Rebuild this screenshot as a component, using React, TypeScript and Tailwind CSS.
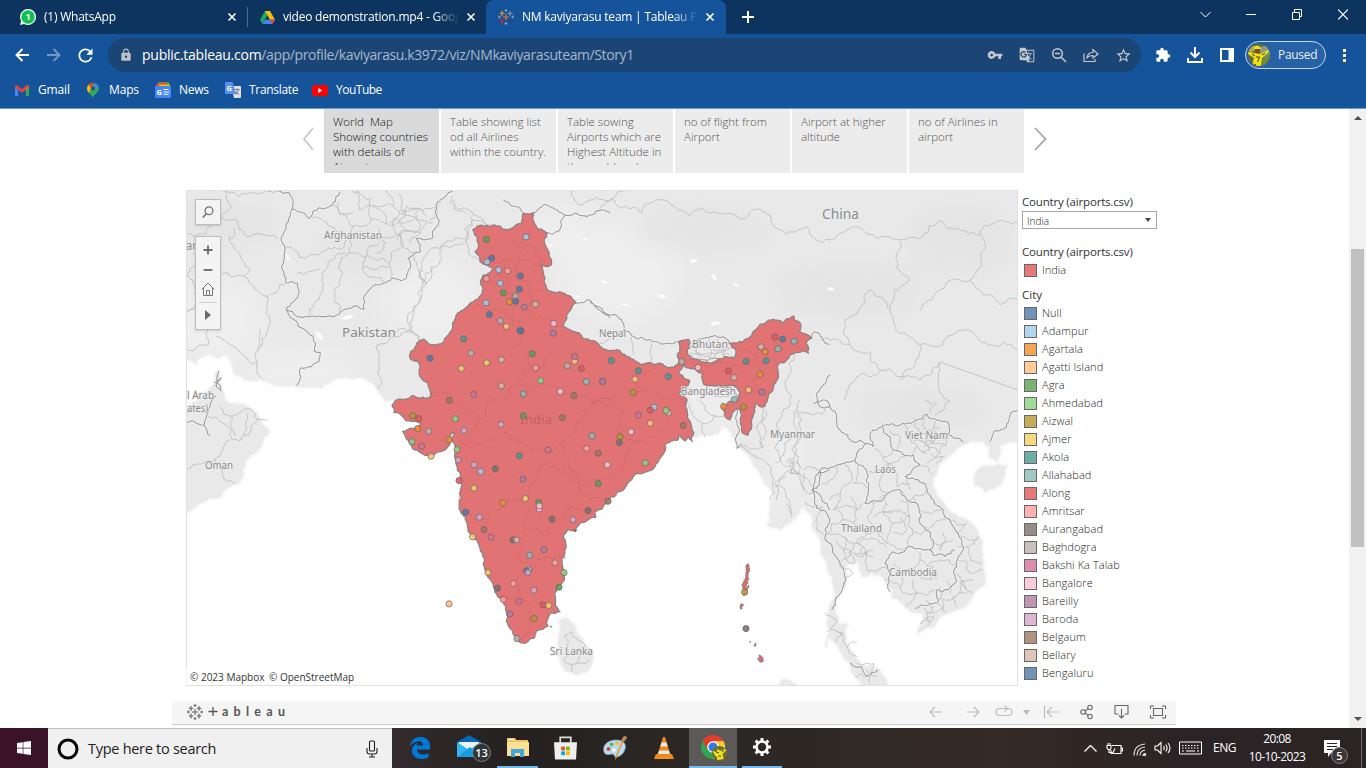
import React from "react";
import { FaWindows } from "react-icons/fa";
import { MdVpnKey, MdExtension, MdStarBorder, MdLock, MdGTranslate, MdRefresh } from "react-icons/md";

type Pt = [number, number];

/* ---------- map geometry helpers ---------- */
function parse(s: string, ox = 0, oy = 0, k = 1): Pt[] {
  return s.trim().split(/\s+/).map((p) => {
    const [x, y] = p.split(",").map(Number);
    return [ox + x * k, oy + y * k] as Pt;
  });
}
function noise(x: number, y: number) {
  const v = Math.sin(x * 12.9898 + y * 78.233) * 43758.5453;
  return (v - Math.floor(v)) * 2 - 1;
}
function rough(pts: Pt[], amp = 0.16, min = 3): Pt[] {
  const out: Pt[] = [pts[0]];
  const add = (a: Pt, b: Pt) => {
    const dx = b[0] - a[0];
    const dy = b[1] - a[1];
    const len = Math.hypot(dx, dy);
    if (len > min && len < 70) {
      const mx = (a[0] + b[0]) / 2;
      const my = (a[1] + b[1]) / 2;
      const n = noise(Math.round(mx * 7), Math.round(my * 7)) * amp;
      const m: Pt = [mx - dy * n, my + dx * n];
      add(a, m);
      add(m, b);
    } else out.push(b);
  };
  for (let i = 1; i < pts.length; i++) add(pts[i - 1], pts[i]);
  return out;
}
const toPath = (pts: Pt[], close = false) =>
  "M" + pts.map((p) => p[0].toFixed(1) + " " + p[1].toFixed(1)).join("L") + (close ? "Z" : "");
const T = 1 / 3;
const lines = (list: string[], ox = 0, oy = 0, k = 1, amp = 0.24) =>
  list.map((s) => toPath(rough(parse(s, ox, oy, k), amp, 2.4))).join("");

const INDIA = parse(`523.3,213.3 533.3,212.7 534,221.7 537.3,228.3 547.3,232.7 544,240 546,246.7 549,256 551.7,263.3 547.3,266.7 540,263.3 543.3,271.7 544,281.7 547.3,289.3 560,291.7 576,302.7 566.7,315 563.3,326 583.3,338.3 590,340.7 606,349.3 620,350.7 633.3,359.3 653.3,364 675,366 679.3,360 677.3,355 678.3,341.7 688.3,339 690,343.3 687.3,350 690.7,358.3 700,360.7 733.3,358.3 735.7,350 729.3,343.3 743.3,341.7 753.3,331.7 770,320 783.3,322.7 794,316 795,320.7 800,322.7 799.3,331.7 811.7,338.3 806,344 808.3,353.3 803.3,350.7 790,355 779.3,363.3 778.3,375 773.3,385 768.3,396.7 765,406 755,404 754,413.3 751.7,426.7 748.3,435 742.7,433.3 740.7,421.7 738.3,408.3 731.7,413.3 730,420 725,416.7 722.7,406.7 728.3,401.7 738.3,400 740,393.3 736.7,387.3 723.3,386 703.3,383.3 702.7,374 690,368.3 683.3,365 678.3,371.7 689.3,380 688.3,385 678.3,393.3 687.3,400 687.3,410 690.7,423.3 692.3,441.7 688,437 685,441 680,435 678,440 665,445 662.7,455 655,466.7 636.7,473.3 623.3,490 606.7,501.7 595,511.7 595.7,517.5 580,523.3 575,530.7 568.3,529.3 563.3,536.7 565,553.3 565,573.3 558.3,586.7 560,611.7 551.7,612.7 546.7,621.7 548,626 536.7,630.7 534,638.3 525,643.3 517.3,640.7 510,628.3 506.7,613.3 501.7,600 493.3,586.7 485,570 480,548.3 472.7,536.7 465,516.7 460,491.7 457.3,470 455,450 455,433 451.7,433 450,443 446.7,448.3 430,456 421,453 409,442 402.7,431 414,429 421,422.7 406,421 394,412.7 392,405 399,399 426,398 431,396 427.7,382.7 419,374 419,362 410,357.7 416,346 424,339 429.3,344 444,341 452.7,327.7 466,307.7 473.3,301.7 482.7,290 483.3,275 493.3,268.3 480,261.7 475,251.7 477.3,236.7 472.7,230 477,226 490,226.7 506.7,230 521.7,223.3 523.3,213.3`);

const LAND = parse(`180,357 186,359 196,364 208,354 219,358 226,354 231,361 234,374 261,379 296,386 329,383 366,379 379,391 385,401 400,401 500,440 600,460 660,430 692,437 710,436 718,434 723,425 732,433 737,447 750,458 758,470 764,482 773,497 770,510 767,525 780,530 792,520 803,505 812,515 818,537 827,567 835,593 831,603 828,613 825,647 831,637 840,650 850,663 855,676 862,686 895,692 885,678 873,667 857,660 845,637 848,624 837,625 835,610 845,587 846,567 850,563 860,563 863,577 880,575 892,598 907,608 920,613 926,617 918,635 933,627 947,613 970,600 982,587 983,560 978,533 963,518 943,503 933,480 938,467 943,462 967,443 982,441 990,447 990,458 997,461 1000,455 1000,445 1018,442 1030,440 1030,180 180,180 180,357`);

const ISLES = [
  "974,477 980,468 990,466 1007,465 1005,475 995,488 985,492 975,485 974,477",
  "180,404 190,406 204,400 210,388 218,371 221,386 224,396 230,404 246,406 258,416 269,431 262,445 250,455 245,466 238,484 222,496 204,502 186,512 180,512 180,404",
  "560,620 564,618 572,623 580,637 590,650 593,657 590,668 578,674 566,671 560,660 558,645 560,630 560,620",
  "782,680 788,680 800,690 780,690 782,680",
];
const ANDAMANS = [
  "747,564 749,565 748,575 746,585 745,595 743,595 744,582 746,572 747,564",
  "741,604 743,604 742,609 740,608 741,604",
  "750,641 751,642 750,642 750,641",
  "755,644 756,643 756,646 754,646 755,644",
  "759,655 761,656 762,662 760,662 759,655",
];

const borders =
  lines([
    "275,15 310,20 318,70 300,125 285,155 298,190 300,290 335,292 338,320 300,370 335,420 380,450 385,495 403,500 400,525 345,545 332,600",
    "318,70 345,78 370,97 400,65 440,55 462,18",
    "300,370 370,392 460,385 535,370 535,330 560,300 600,290 620,275 660,278 665,215 705,195 690,158 740,155 745,130 760,105 750,55 780,30 800,15",
    "0,710 53,718 62,690 75,650 90,630",
    "53,718 72,750",
    "85,590 105,575 90,600 105,615 95,590 98,555",
  ], 186, 186, T, 0.18) +
  lines([
    "558,308 600,300 640,335 660,355",
    "400,40 340,0", "430,38 470,15 525,45 510,90 472,98",
    "525,45 590,50 620,32 660,40",
  ], 390, 200, T, 0.18) +
  lines([
    "0,5 60,45 95,60 100,90 160,115 200,125 262,125",
    "298,148 340,115 400,110 418,132", "300,165 310,178 370,175 435,172",
    "665,115 675,95 690,105 705,130 720,132", "720,225 680,280 690,320 720,318",
    "340,255 420,262 445,290", "445,325 440,445 455,430", "720,510 690,515 670,570 720,630",
  ], 590, 300, T, 0.18) +
  lines([
    "220,10 265,5 300,90 340,125 380,130 400,140 398,90 425,80 490,70 560,42 595,60 620,65 625,100 670,125",
    "748,125 800,80 834,30",
    "380,130 350,160 345,180 300,195 240,210 230,265 215,270 270,360 255,415 295,480 310,560 275,630",
    "425,80 450,110 460,150 520,165 540,195 495,230 560,265 600,320 630,360 655,400 650,500 650,545 590,570 595,605 525,625",
    "345,180 380,215 385,265 375,310 445,280 480,270 535,320 540,370 568,395 570,450 580,465 645,450",
    "570,450 460,455 435,490 450,575", "330,790 365,800 380,830 415,810",
  ], 740, 400, T, 0.2);

const provinces =
  lines([
    "0,140 60,142 100,100 150,100 180,150 275,158", "130,150 190,250 175,270 120,260 60,250", "175,270 240,330 300,290",
    "240,330 245,430 215,490 215,530 230,580", "90,450 140,480 215,530", "0,490 65,480 65,430",
    "110,15 130,70 105,100", "20,200 30,340 5,375", "145,125 130,160", "0,380 30,370",
    "370,390 405,320 420,250 480,200", "460,380 460,300 490,200", "300,185 340,215 400,205 460,190 480,150 430,120 380,95", "335,262 400,250",
    "430,60 500,120 560,100 620,120 640,80", "500,120 490,200 540,210 610,230 650,180", "560,100 555,40 500,15", "600,15 620,60 700,70 750,60",
    "540,210 530,245 600,290", "610,230 615,275", "620,120 650,180 705,195", "650,180 640,145 700,130 690,95 640,80", "580,130 600,170 570,200",
    "560,160 640,145", "700,70 690,95 740,110", "640,25 660,90", "670,210 700,260 735,190 780,180 840,165", "700,260 710,310 680,390 675,435 700,470",
    "575,610 580,550 570,480 630,438 675,435", "120,15 200,20 280,15", "510,15 520,70", "460,50 460,85 500,80",
    "100,660 140,690 180,670", "140,690 150,750", "180,670 215,700 245,700", "180,680 175,750", "100,560 85,600 105,615",
    "215,490 222,430", "480,150 520,155 560,160", "800,30 805,70 840,80", "700,260 720,295 735,240",
    "520,70 560,60 620,60", "560,60 600,90 600,115", "530,245 560,250 610,240", "690,95 660,110 620,120", "540,210 560,180 580,170",
  ], 186, 186, T) +
  lines([
    "155,135 230,120 245,60 290,80", "190,0 200,25 280,60 310,80", "240,50 235,100 245,170 275,180", "60,390 70,330 95,260 100,210",
    "120,60 150,10", "155,135 130,200 95,250", "0,395 60,398 85,425", "640,340 660,350",
    "0,70 30,60 50,20 90,25 110,50", "30,60 50,90 20,120", "50,90 90,100 110,70", "60,130 90,100",
  ], 390, 200, T) +
  lines([
    "100,90 30,130", "185,130 182,185", "130,105 130,165", "320,130 335,175", "350,115 360,175", "385,115 370,150 435,150", "310,150 420,145", "400,150 405,175",
    "300,310 310,350 340,370 345,410", "340,370 400,350 395,305", "330,305 345,330 380,350", "270,275 350,285 420,285",
    "615,165 605,290 560,370 555,440 600,500", "625,335 660,340 720,320", "620,335 620,450 590,490", "525,330 520,440 450,440", "450,440 520,480 550,560 540,600",
    "600,490 600,520 625,520 625,490 600,490", "625,520 640,560 670,580", "590,530 555,560", "555,550 560,600", "640,510 660,500 690,515", "590,610 600,640",
    "570,190 615,165", "300,160 340,165 380,160 420,165", "330,115 345,150", "410,120 400,150",
  ], 590, 300, T) +
  lines([
    "70,0 75,80 65,145", "180,0 160,40 165,110 135,130 105,190", "155,180 175,220 150,220 150,180", "105,250 180,220 215,260", "110,255 150,310 155,350",
    "190,220 190,270", "175,100 180,200", "290,200 270,240 245,250", "310,190 330,250 300,285 270,300", "355,195 340,250 385,265",
    "300,285 280,330 310,360 275,370", "330,290 350,330 400,310 430,285", "350,330 340,370 380,400 350,430", "275,370 260,405 310,410 350,430 440,440",
    "430,285 430,340 460,370 440,430", "460,370 510,350 500,300 480,270", "510,350 520,400 560,390", "440,430 500,445 520,400", "400,310 400,380 440,430",
    "310,410 310,450 370,470 400,450", "340,430 345,490", "370,440 380,510 440,500", "310,450 300,500 340,520 310,560", "345,460 400,470",
    "385,215 420,210 450,190 500,165", "400,145 430,170 460,150", "430,170 420,260 445,280", "560,265 520,290 535,320", "500,230 510,270", "450,190 470,260",
    "450,90 480,110 470,150", "490,75 500,110 530,140 510,165", "520,55 540,100 590,110", "560,42 555,90", "590,60 580,130 620,140", "540,120 600,160 560,190",
    "600,110 620,130 600,160", "550,140 600,120", "570,160 610,170 590,190", "530,140 560,160", "540,195 580,225", "540,330 610,330", "550,380 600,360 630,360",
    "630,360 680,370 650,400", "655,400 715,410 680,440 655,440", "680,440 690,480 725,490", "655,480 690,520 730,510", "650,520 680,570 700,580", "610,400 600,450",
    "460,490 500,510 540,480 580,500 590,540", "500,510 480,560 520,580 590,570", "435,540 480,560", "520,540 530,580 500,620", "540,480 540,455",
    "560,500 600,480 650,500", "590,610 620,640", "595,600 640,590 680,580", "550,625 570,665 540,670", "570,640 600,630 610,600", "640,590 650,620", "560,680 580,650 550,650", "680,570 660,550 700,540",
    "570,35 590,10 555,0", "255,415 230,390 245,320 195,305", "255,640 290,660 260,695", "290,690 320,740 350,730", "270,690 310,700 290,730", "350,790 400,790 385,830 345,830", "380,810 410,830",
    "390,850 415,810", "320,740 350,770",
    "280,330 330,320 350,330", "310,360 340,370", "380,400 430,400", "400,350 460,340", "430,340 480,330 510,350", "460,400 500,390 480,350", "330,450 320,480 345,490",
    "350,430 370,440 360,460", "290,420 300,440 310,450", "520,290 480,300", "570,420 610,430 640,420", "600,450 610,430", "440,500 435,490", "520,120 560,130", "560,90 600,85",
    "560,110 570,150 550,160", "580,130 560,120", "470,260 510,250", "540,530 570,540 590,530", "560,500 570,540", "620,545 630,580", "660,580 670,540", "560,600 580,620 560,640", "600,600 600,560",
  ], 740, 400, T) +
  lines([
    "565,635 572,632 578,640 585,645 576,652 567,648 565,635", "567,648 564,660 575,664 578,654", "575,664 590,660", "571,664 572,672",
    "570,190 580,205 620,208 660,200 720,214 760,209", "760,209 780,230 830,240 860,228 900,240", "900,240 940,220 980,235 1018,222", "820,340 850,345 880,370 940,362 1018,390",
    "900,240 910,280 890,310 920,345 900,380", "980,235 970,280 1000,305 1018,300", "920,345 960,330 1018,350", "600,210 630,190", "850,345 845,320 870,290 890,310",
    "845,400 860,375 880,370", "940,362 950,400 935,415", "186,470 215,460 230,440", "206,416 232,440 258,420", "215,460 235,485", "970,280 940,290 920,310",
  ], 0, 0, 1, 0.22);

const states = lines([
  "483,262 505,258 530,262 544,270", "506,230 520,246 545,262", "505,258 498,275 483,282", "520,250 515,280 535,290 545,288", "498,275 515,300 512,318 521,330",
  "474,306 500,310 512,318 516,345 525,352 530,368 548,356", "530,290 528,310 545,320 564,326", "530,368 514,385 530,388 552,385 575,392 612,398 640,392",
  "431,394 450,394 462,405 480,420 490,400 514,385", "480,420 460,445 480,443 530,448 565,440 592,402 612,398", "592,402 620,410 640,392 633,375 655,365",
  "640,392 660,398 687,392", "565,440 572,470 580,490 600,480 625,470 640,440 665,430", "457,450 480,443", "460,488 488,520 520,500 538,470 572,470", "520,500 524,530 518,560 530,570 552,560 566,558",
  "572,470 590,500 605,500", "524,530 565,520 590,506", "500,595 520,600 524,570 530,570", "520,600 522,640", "625,410 615,430 640,440", "690,360 700,362 733,365 760,368 778,362", "743,350 760,370 750,392 770,394",
], 0, 0, 1, 0.3);

const PALETTE: Record<string, string> = {
  n: "#4e79a7", b: "#a0cbe8", o: "#f28e2b", O: "#ffbe7d", g: "#59a14f", G: "#8cd17d", y: "#b6992d", Y: "#f1ce63", t: "#499894", T: "#86bcb6",
  r: "#e15759", s: "#ff9d9a", k: "#79706e", K: "#bab0ac", m: "#d37295", p: "#fabfd2", u: "#b07aa1", l: "#d4a6c8", w: "#9d7660", W: "#d7b5a6",
};
const DOTS: [string, number, number, number][] = [
  ["289,118,g 408,110,b 305,174,n 291,185,b 326,209,b 353,212,s 391,227,n 289,235,s 331,249,b 388,267,n 340,278,g 376,288,K 358,305,o 377,303,n 288,308,b 403,321,u 436,312,W 298,343,n 331,362,K 349,379,O 393,392,n 390,391,n 491,370,p 490,399,u 221,416,t 243,459,K 120,474,n 214,505,Y 290,488,Y 334,478,W 427,461,g 554,483,O 554,469,m 532,497,K 574,505,r 437,503,s 452,541,G 589,544,T 638,543,u 334,557,W 400,581,T 511,574,p 552,586,w 251,583,m 178,600,w 68,647,y 86,655,r 196,656,G 400,647,g 517,652,w 83,685,o 116,693,K 66,724,G 95,738,m 123,768,O", 390, 200, T],
  ["64,181,t 145,212,t 135,237,O 38,244,u 235,229,t 129,277,y 192,321,b 181,330,r 145,345,m 236,338,W 228,331,G 181,369,O 123,395,p 280,376,w 90,410,y 88,427,k 275,184,K 324,202,p 415,212,r 432,232,W 468,183,t 528,182,t 513,140,W 525,155,o 555,111,r 578,117,n 564,146,T 612,123,T 510,223,o 476,269,O 516,276,u 433,298,T 401,319,o 461,320,y", 590, 300, T],
  ["213,13,l 102,31,l 57,59,o 81,88,G 85,119,l 132,134,l 152,154,b 196,146,k 268,107,t 354,89,m 279,177,u 87,181,r 132,204,Y 219,248,o 286,235,Y 326,247,g 328,266,p 328,257,p 107,276,n 148,291,l 162,328,w 183,351,m 128,350,Y 366,297,k 429,298,l 474,271,k 534,243,w 505,190,g 646,128,G 532,134,p 504,99,w 470,85,s 486,47,T 249,359,k 260,359,W 342,388,u 299,405,T 375,428,s 296,449,b 290,452,n 294,457,l 402,457,G 387,501,g 174,457,Y 203,504,k 250,490,s 312,510,l 220,538,s 267,543,m 339,554,r 356,556,Y 240,581,u 312,595,y 261,655,K 57,551,O", 430, 420, T],
  ["14,576,y 18,685,k", 740, 400, T],
];

const MAP_LABELS: [string, number, number, number, number][] = [
  ["Afghanistan", 324, 239, 58, 10.5], ["Pakistan", 342, 337, 54, 13], ["China", 822, 219, 37, 13.5], ["Nepal", 599, 337, 27, 10.5], ["Bhutan", 692, 348, 36, 10.5],
  ["Bangladesh", 681, 395, 55, 10.5], ["Myanmar", 770, 438, 45, 10.5], ["Viet Nam", 905, 439, 43, 10.5], ["Laos", 875, 473, 21, 10.5], ["Thailand", 841, 532, 41, 10.5],
  ["Cambodia", 889, 576, 48, 10.5], ["Sri Lanka", 550, 655, 43, 10.5], ["Oman", 205, 469, 28, 10.5], ["l Arab", 187, 399, 27, 10.5], ["ates)", 187, 412, 21, 10.5], ["an", 186, 250, 13, 13],
];

function MapDrawing() {
  const land = toPath(rough(LAND, 0.16), true) + ISLES.map((s) => toPath(rough(parse(s), 0.18), true)).join("");
  return (
    <svg className="block h-[496px] w-[832px]" viewBox="186 190 832 496">
      <defs>
        <filter id="soft" x="-20%" y="-20%" width="140%" height="140%"><feGaussianBlur stdDeviation="12" /></filter>
        <filter id="halo"><feGaussianBlur stdDeviation="1.3" /></filter>
        <clipPath id="landClip"><path d={land} /></clipPath>
      </defs>
      <rect x="186" y="190" width="832" height="496" fill="#fff" />
      <path d={land} fill="none" stroke="#f1f1f1" strokeWidth="2.5" filter="url(#halo)" />
      <path d={land} fill="#e9e9e9" />
      <g clipPath="url(#landClip)">
        <g filter="url(#soft)" fill="#efefef">
          <ellipse cx="215" cy="320" rx="50" ry="40" /><ellipse cx="300" cy="370" rx="60" ry="18" /><ellipse cx="430" cy="300" rx="45" ry="40" />
          <ellipse cx="620" cy="270" rx="60" ry="50" /><ellipse cx="560" cy="235" rx="35" ry="25" /><ellipse cx="785" cy="470" rx="14" ry="50" />
          <ellipse cx="710" cy="410" rx="25" ry="20" />
        </g>
        <g filter="url(#soft)" fill="#e4e4e4">
          <ellipse cx="370" cy="250" rx="50" ry="20" /><ellipse cx="850" cy="290" rx="70" ry="25" /><ellipse cx="920" cy="410" rx="60" ry="20" />
          <ellipse cx="960" cy="240" rx="50" ry="30" /><ellipse cx="700" cy="230" rx="70" ry="18" /><ellipse cx="225" cy="225" rx="50" ry="18" />
        </g>
      </g>
      <g fill="#fcfcfc">
        <path d="M547 244l4 0 3 3-4-1zM582 238l5 1 3 2-6-1zM602 280l7 2-4 2-4-2zM315 330l7 5 1 5-6-2zM341 318l8-3 6 1-9 4zM286 251l4 9-3 1zM657 296l5-2 5 2-4 3zM711 274l4 1 2 6-4-2zM690 260l6-1 2 3-7 1zM828 287l6 1-1 3-5-1zM710 323l8-2 3 4-4-1-4 2z" />
        <path d="M575 296l5-1 1 2-5 1zM622 304l6 0 1 2-6 0zM733 283l5 1 1 3-4-1z" />
      </g>
      <path d={provinces} fill="none" stroke="#b4b4b4" strokeWidth="0.7" strokeLinejoin="round" />
      <path d={borders} fill="none" stroke="#fafafa" strokeWidth="2.6" opacity="0.6" />
      <path d={borders} fill="none" stroke="#9b9b9b" strokeWidth="1.05" strokeLinejoin="round" />
      <path d={toPath(rough(INDIA, 0.17, 2.6), true)} fill="#e27374" stroke="#8b8080" strokeWidth="1.2" strokeLinejoin="round" />
      <path d={states} fill="none" stroke="#cf6869" strokeWidth="0.7" />
      {ANDAMANS.map((s) => <path key={s} d={toPath(rough(parse(s), 0.3, 2), true)} fill="#dc6c6e" stroke="#8b8080" strokeWidth="1" />)}
      <path d="M573 530l4 0-2 2zM550 626l2 1zM748 585l1 1-1 2z" fill="#866" stroke="#866" strokeWidth="0.8" />
      <text x="520" y="424" textLength="32" fontSize="13" fill="#c06163" fontFamily="Noto Sans, sans-serif">India</text>
      {MAP_LABELS.map(([t, x, y, w, s]) => (
        <text key={t} x={x} y={y} textLength={w} lengthAdjust="spacingAndGlyphs" fontSize={s} fill="#8a8a8a" stroke="#eeeeee" strokeWidth="1.6" paintOrder="stroke" fontFamily="Noto Sans, sans-serif" fontWeight="400">{t}</text>
      ))}
      {DOTS.map(([s, ox, oy, k], gi) =>
        s.split(" ").map((d, i) => {
          const [x, y, c] = d.split(",");
          return <circle key={gi + "-" + i} cx={ox + +x * k} cy={oy + +y * k + 0.2} r="3.1" fill={PALETTE[c]} fillOpacity="0.88" stroke="#6f6668" strokeOpacity="0.75" strokeWidth="1" />;
        })
      )}
    </svg>
  );
}

/* ---------- small icons ---------- */
function CloseX() {
  return <svg className="h-[10px] w-[10px] shrink-0" viewBox="0 0 10 10"><path d="M1.5 1.5l7 7M8.5 1.5l-7 7" stroke="#fff" strokeWidth="1.6" /></svg>;
}
function TableauMark({ color, className }: { color?: boolean; className: string }) {
  const c = (v: string) => (color ? v : "#5b5b5b");
  return (
    <svg className={className} viewBox="0 0 16 16" fill="none" strokeWidth={color ? 1.2 : 1}>
      <path d="M8 5v6M5 8h6" stroke={c("#e8762b")} />
      <path d="M4 2v5M1.8 4.3h4.6" stroke={c("#eb9129")} />
      <path d="M12 2v5M9.8 4.3h4.6" stroke={c("#7199a6")} />
      <path d="M4 9.5v5M1.8 12h4.6" stroke={c("#e8173c")} />
      <path d="M12 9.5v5M9.8 12h4.6" stroke={c("#1f447e")} />
      <path d="M8 0v3M6.5 1.4h3M8 13v3M6.5 14.6h3M1.3 6.4v3M0 8h2.8M14.7 6.4v3M13.2 8H16" stroke={c("#8faab8")} strokeWidth="0.9" />
    </svg>
  );
}
function WhatsApp() {
  return (
    <svg className="h-4 w-4" viewBox="0 0 16 16">
      <path d="M0 16l1.1-4A8 8 0 1 1 4 14.9z" fill="#e9fbef" />
      <circle cx="8" cy="8" r="6.7" fill="#0fbf50" />
      <text x="8" y="11.4" textAnchor="middle" fontSize="9" fontWeight="700" fill="#fff" fontFamily="Noto Sans, sans-serif">1</text>
    </svg>
  );
}
function Drive({ className }: { className: string }) {
  return (
    <svg className={className} viewBox="0 0 16 16">
      <path d="M5.3 1h5.4L8 5.7 2.7 15 0 10.3z" fill="#22a55b" />
      <path d="M5.3 1h5.4L16 10.3h-5.4z" fill="#fbbc04" />
      <path d="M5.4 10.3H16L13.3 15H2.7z" fill="#4285f4" />
      <path d="M10.6 10.3H16L13.3 15z" fill="#ea4335" />
    </svg>
  );
}
function Gmail() {
  return (
    <svg className="h-[11px] w-[14px]" viewBox="0 0 14 11">
      <path d="M0 1.5V10q0 1 1 1h2.2V4z" fill="#4285f4" />
      <path d="M14 1.5V10q0 1-1 1h-2.2V4z" fill="#34a853" />
      <path d="M10.8 1L14 .6v2L10.8 5z" fill="#fbbc04" />
      <path d="M0 1q.7-1.5 2-.7L7 4l5-3.7q1.3-.7 2 .7v1.3L7 7.7 0 2.3z" fill="#ea4335" />
    </svg>
  );
}
function MapsPin() {
  return (
    <svg className="h-[15px] w-[12px]" viewBox="0 0 12 15">
      <path d="M6 0a6 6 0 0 1 6 5.6C12 9.5 7.5 10.5 6 15 5.3 12 0 9.500 0 5.6A6 6 0 0 1 6 0z" fill="#34a853" />
      <path d="M1 9C-.5 6.5 0 3 1.500 1.8L4.500 4.2 2 9.500z" fill="#fbbc04" />
      <path d="M1.500 1.8A6 6 0 0 1 7.500.2L3.8 4.7z" fill="#ea4335" />
      <path d="M7 0.1A6 6 0 0 1 11.500 3.500L8 7z" fill="#4285f4" />
      <circle cx="6" cy="5.500" r="2" fill="#1b4f93" />
    </svg>
  );
}
function NewsIcon() {
  return (
    <svg className="h-4 w-4" viewBox="0 0 16 16">
      <path d="M3 0h11v6H3z" fill="#34a853" /><path d="M1 2l10-2 1 6H1z" fill="#ea4335" /><path d="M4 2.500h11V7H4z" fill="#fbbc04" />
      <rect y="4" width="16" height="12" rx="1" fill="#4285f4" />
      <text x="1.500" y="12.500" fontSize="7.500" fontWeight="700" fill="#fff" fontFamily="Open Sans, sans-serif">G</text>
      <path d="M8.500 7.500h5M8.500 10h6M8.500 12.300h5" stroke="#fff" />
    </svg>
  );
}
function TranslateIcon() {
  return (
    <svg className="h-4 w-4" viewBox="0 0 16 16">
      <path d="M6 4h9q1 0 1 1v10q0 1-1 1H9z" fill="#dfe3e8" /><path d="M1 0h6.500L11 12H1q-1 0-1-1V1q0-1 1-1z" fill="#5a8ff0" />
      <text x="1.500" y="9" fontSize="7.500" fontWeight="700" fill="#fff" fontFamily="Open Sans, sans-serif">G</text>
      <path d="M9.500 7.500h5M12 6.500v1M13.500 7.500q-1 4-3.500 5M10.500 9q1.500 3 3.500 3.500" stroke="#687079" fill="none" strokeWidth=".9" />
    </svg>
  );
}
function Avatar({ className }: { className: string }) {
  return (
    <svg className={className} viewBox="0 0 22 22">
      <clipPath id="av"><circle cx="11" cy="11" r="11" /></clipPath>
      <g clipPath="url(#av)">
        <rect width="22" height="22" fill="#5f6b42" />
        <path d="M11 3l11-2v9l-8 4z" fill="#8c9a80" /><path d="M0 4l5-4 3 5-6 5z" fill="#b3a64e" />
        <path d="M14 14l8-4v12h-8z" fill="#6f8a3a" />
        <path d="M0 8l6 1 6 1 8-4 1 1-7 7-1 8H4l2-8-6-4z" fill="#f2e30c" />
        <path d="M6 3q3-3 6 0l1 2H6z" fill="#f2e30c" /><path d="M7 5h5l-1 4H8z" fill="#7c4a20" />
        <path d="M8 13h3.500l-2 5M4 10l3 2M14 11l3-2M6 20l2 1" stroke="#3a3408" fill="none" />
      </g>
    </svg>
  );
}

function Tab({ icon, label, width, active }: { icon: React.ReactNode; label: string; width: string; active?: boolean }) {
  return (
    <div className={`flex h-[34px] items-center ${width} ${active ? "rounded-t-lg bg-[#15539a]" : ""}`}>
      <span className="flex w-4 shrink-0 justify-center">{icon}</span>
      <span className="ml-2 h-5 min-w-0 flex-1 overflow-hidden whitespace-nowrap text-[12px] leading-5 tracking-[-0.22px] text-white [mask-image:linear-gradient(90deg,#000_86%,transparent_100%)]">{label}</span>
      <span className="ml-[7px] flex"><CloseX /></span>
    </div>
  );
}

function Browser() {
  return (
    <header className="h-[109px] border-b border-[#6f9bcb] bg-[#15539a]">
      <div className="flex h-[34px] bg-[#0c345f]">
        <Tab icon={<WhatsApp />} label="(1) WhatsApp" width="w-[247px] pl-5 pr-[10px]" />
        <div className="mt-[7px] h-5 w-px bg-[#4d6b8c]" />
        <Tab icon={<Drive className="h-[15px] w-[15px]" />} label="video demonstration.mp4 - Google" width="w-[238px] pl-[11px] pr-[10px]" />
        <Tab active icon={<TableauMark color className="h-4 w-4" />} label="NM kaviyarasu team | Tableau Public" width="w-[240px] pl-[12px] pr-[11px]" />
        <div className="flex w-[44px] items-center justify-center"><svg className="h-3 w-3" viewBox="0 0 12 12"><path d="M6 0v12M0 6h12" stroke="#fff" strokeWidth="2" /></svg></div>
        <div className="ml-auto flex h-[29px] items-center">
          <svg className="mr-[35px] h-[7px] w-[11px]" viewBox="0 0 11 7"><path d="M.5 1l5 5 5-5" fill="none" stroke="#fff" /></svg>
          <svg className="mr-[36px] h-[1px] w-[10px]" viewBox="0 0 10 1"><path d="M0 .5h10" stroke="#fff" /></svg>
          <svg className="mr-[36px] h-[11px] w-[10px]" viewBox="0 0 10 11"><path d="M.5 3.500h7v7h-7zM2.500 3V.5h7v7H8" fill="none" stroke="#fff" /></svg>
          <svg className="mr-[18px] h-[11px] w-[10px]" viewBox="0 0 10 11"><path d="M0 .5l10 10M10 .5l-10 10" stroke="#fff" strokeWidth="1.100" /></svg>
        </div>
      </div>
      <div className="flex h-[42px] items-center">
        <svg className="ml-[15px] h-[14px] w-[14px]" viewBox="0 0 14 14" fill="none" stroke="#fff" strokeWidth="1.900"><path d="M14 7H1.500M7.500 1L1.500 7l6 6" /></svg>
        <svg className="ml-[18px] h-[14px] w-[14px]" viewBox="0 0 14 14" fill="none" stroke="#7296c4" strokeWidth="1.900"><path d="M0 7h12.500M6.500 1l6 6-6 6" /></svg>
        <MdRefresh className="ml-[14px] h-[21px] w-[21px] text-white" />
        <div className="ml-[12px] flex h-[34px] w-[1033px] items-center rounded-full bg-[#1a4574] pr-[9px]">
          <MdLock className="ml-[11px] h-[14px] w-[14px] text-[#bcc2ca]" />
          <span className="ml-[9px] whitespace-nowrap text-[14px] leading-5 tracking-[-0.4px] text-[#a6b7cb]"><span className="tracking-[-0.26px] text-white">public.tableau.com</span>/app/profile/kaviyarasu.k3972/viz/NMkaviyarasuteam/Story1</span>
          <div className="ml-auto flex items-center gap-[16px] text-[#c4c8cd]">
            <MdVpnKey className="h-[16px] w-[16px]" /><MdGTranslate className="h-[16px] w-[16px]" />
            <svg className="h-[16px] w-[16px]" viewBox="0 0 16 16" fill="none" stroke="currentColor" strokeWidth="1.500"><circle cx="6.500" cy="6.500" r="4.800" /><path d="M4 6.500h5M10 10l5 5" /></svg>
            <svg className="h-[16px] w-[16px]" viewBox="0 0 16 16" fill="none" stroke="currentColor" strokeWidth="1.200"><path d="M1 6.500v8h11V12M4 10.500q1-5 6-5V2.500l5 4.500-5 4v-2.500q-4 0-6 2z" /></svg>
            <MdStarBorder className="h-[17px] w-[17px]" />
          </div>
        </div>
        <MdExtension className="ml-[14px] h-[16px] w-[16px] text-white" />
        <svg className="ml-[16px] h-[16px] w-[16px]" viewBox="0 0 16 16" fill="none" stroke="#fff" strokeWidth="2"><path d="M8 0v9.500M3.500 5.500L8 10l4.500-4.500M1 11v4h14v-4" /></svg>
        <svg className="ml-[17px] h-[14px] w-[14px]" viewBox="0 0 14 14"><path d="M1 1h12v12H1z" fill="none" stroke="#fff" strokeWidth="2" /><path d="M8.500 1H13v12H8.500z" fill="#fff" /></svg>
        <div className="ml-[11px] flex h-[28px] w-[81px] items-center rounded-full border border-[#c5d5ea] bg-[#2862a6] pl-[2px] text-[12px] tracking-[-0.3px] text-[#e8eef8]"><Avatar className="mr-[8px] h-[22px] w-[22px]" />Paused</div>
        <svg className="ml-[17px] h-[13px] w-[3px]" viewBox="0 0 3 13" fill="#fff"><path d="M0 0h3v3H0zM0 5h3v3H0zM0 10h3v3H0z" /></svg>
      </div>
      <div className="flex h-[28px] items-center pl-[15px] text-[12px] leading-4 tracking-[-0.15px] text-white">
        <Gmail /><span className="ml-[9px] w-[49px]">Gmail</span>
        <MapsPin /><span className="ml-[10px] w-[46px]">Maps</span>
        <NewsIcon /><span className="ml-[8px] w-[46px] tracking-[-0.3px]">News</span>
        <TranslateIcon /><span className="ml-[8px] w-[63px] tracking-[-0.3px]">Translate</span>
        <svg className="h-[11px] w-4" viewBox="0 0 16 11"><rect width="16" height="11" rx="2.500" fill="#f00" /><path d="M6.300 3v5l4-2.500z" fill="#fff" /></svg>
        <span className="ml-[8px] tracking-[-0.5px]">YouTube</span>
      </div>
    </header>
  );
}

const STORY: string[][] = [
  ["World  Map", "Showing countries", "with details of", "Airport"],
  ["Table showing list", "od all Airlines", "within the country."],
  ["Table sowing", "Airports which are", "Highest Altitude in", "the world and"],
  ["no of flight from", "Airport"],
  ["Airport at higher", "altitude"],
  ["no of Airlines in", "airport"],
];
const LEGEND: [string, string][] = [
  ["Null", "bg-[#7193b8]"], ["Adampur", "bg-[#b3d5ed]"], ["Agartala", "bg-[#f5a555]"], ["Agatti Island", "bg-[#ffcb97]"], ["Agra", "bg-[#7ab372]"], ["Ahmedabad", "bg-[#a3da97]"],
  ["Aizwal", "bg-[#c5ad57]"], ["Ajmer", "bg-[#f4d882]"], ["Akola", "bg-[#6dada9]"], ["Allahabad", "bg-[#9ec9c5]"], ["Along", "bg-[#e7797a]"], ["Amritsar", "bg-[#ffb1ae]"],
  ["Aurangabad", "bg-[#948d8b]"], ["Baghdogra", "bg-[#c8c0bd]"], ["Bakshi Ka Talab", "bg-[#dc8eaa]"], ["Bangalore", "bg-[#fbccdb]"], ["Bareilly", "bg-[#c095b4]"], ["Baroda", "bg-[#ddb8d3]"],
  ["Belgaum", "bg-[#b19180]"], ["Bellary", "bg-[#dfc4b8]"], ["Bengaluru", "bg-[#7193b8]"],
];

function Viz() {
  return (
    <div className="flex min-w-0 flex-1 flex-col">
      <div className="flex h-[64px] pl-[302px]">
        <svg className="mr-[10px] mt-[18px] h-[24px] w-[12px]" viewBox="0 0 12 24"><path d="M11 1L2 12l9 11" fill="none" stroke="#c9c9c9" strokeWidth="1.800" /></svg>
        <div className="flex gap-[2px] bg-white">
          {STORY.map((s, i) => (
            <div key={i} className={`h-[64px] w-[115px] pl-[9px] pt-[5px] text-[11.5px] leading-[15px] ${i === 0 ? "bg-[#dadada] text-[#111]" : "bg-[#ececec] text-[#555]"}`}>
              <div className="h-[51px] overflow-hidden whitespace-pre font-light">{s.map((l) => <div key={l}>{l}</div>)}</div>
            </div>
          ))}
        </div>
        <svg className="ml-[10px] mt-[18px] h-[24px] w-[14px]" viewBox="0 0 14 24"><path d="M1 1l10.500 11L1 23" fill="none" stroke="#a6a6a6" strokeWidth="1.800" /></svg>
      </div>
      <div className="mt-[17px] flex h-[496px] pl-[186px]">
        <div className="relative h-[496px] w-[832px]">
          <MapDrawing />
          <div className="pointer-events-none absolute inset-0 border border-[#e0e0e0]" />
          <div className="absolute left-[9px] top-[9px] flex h-[26px] w-[26px] items-center justify-center border border-[#bdbdbd] bg-[#f4f4f4] shadow-sm">
            <svg className="h-[12px] w-[12px]" viewBox="0 0 12 12" fill="none" stroke="#757575" strokeWidth="1.300"><circle cx="7" cy="4.800" r="3.900" /><path d="M4 8L.8 11.500" strokeWidth="1.700" /></svg>
          </div>
          <div className="absolute left-[9px] top-[46px] flex h-[94px] w-[26px] flex-col items-center border border-[#bdbdbd] bg-[#f4f4f4] shadow-sm">
            <svg className="mt-[8px] h-[10px] w-[10px]" viewBox="0 0 10 10"><path d="M5 .5v9M.5 5h9" stroke="#6b6b6b" strokeWidth="1.800" /></svg>
            <svg className="mt-[13px] h-[4px] w-[10px]" viewBox="0 0 10 4"><path d="M.5 2h9" stroke="#6b6b6b" strokeWidth="1.800" /></svg>
            <svg className="mt-[10px] h-[14px] w-[14px]" viewBox="0 0 14 14" fill="none" stroke="#777"><path d="M.7 7.300L7 1l6.300 6.300M2.500 6v7.500h9V6M5.500 13.500v-5h3v5" /></svg>
            <div className="mt-[6px] h-px w-[18px] bg-[#d0d0d0]" />
            <svg className="mt-[7px] h-[10px] w-[8px]" viewBox="0 0 8 10"><path d="M1 0l6 5-6 5z" fill="#6b6b6b" /></svg>
          </div>
          <div className="absolute bottom-[1px] left-0 h-[16px] bg-white/60 px-1 text-[10px] leading-[16px] text-[#333]"><span className="inline-block w-[79px]">© 2023 Mapbox</span>© OpenStreetMap</div>
        </div>
        <div className="w-[140px] pl-[4px] pt-[4px] text-[#333]">
          <div className="h-[17px] whitespace-nowrap text-[11.5px] leading-[16px] tracking-[-0.18px]">Country (airports.csv)</div>
          <div className="flex h-[18px] w-[135px] items-center justify-between border border-[#a5a5a5] pl-1 pr-[5px] text-[10px] font-light text-[#222]"><span className="mt-[2px]">India</span><svg className="h-[4px] w-[6px]" viewBox="0 0 6 4"><path d="M0 0h6L3 4z" fill="#444" /></svg></div>
          <div className="mt-[15px] h-[17px] whitespace-nowrap text-[11.5px] leading-[16px] tracking-[-0.18px]">Country (airports.csv)</div>
          <div className="flex h-[18px] items-center pl-[2px] text-[11px] font-light text-[#222]"><span className="mr-[5px] h-[13px] w-[13px] border border-[#686868] bg-[#e7797a]" />India</div>
          <div className="mt-[8px] h-[17px] text-[11.5px] leading-[16px]">City</div>
          {LEGEND.map(([n, c]) => (
            <div key={n} className="flex h-[18px] items-center whitespace-nowrap pl-[2px] text-[11px] font-light tracking-[0.09px] text-[#222]"><span className={`mr-[5px] h-[13px] w-[13px] border border-[#686868] ${c}`} />{n}</div>
          ))}
        </div>
      </div>
      <div className="ml-[172px] mt-[15px] flex h-[24px] w-[1004px] items-center border-b border-[#ccc] bg-[#f5f5f5] pb-[2px] pl-[15px] text-[#555]">
        <TableauMark className="h-4 w-4" />
        <svg className="ml-[5px] h-[11px] w-[10px]" viewBox="0 0 10 11"><path d="M5 1v9M.5 5.500h9" stroke="#555" strokeWidth="1.300" /></svg>
        <span className="ml-[4px] flex w-[63px] justify-between font-[Lato] text-[12.5px] font-bold leading-4"><span>a</span><span>b</span><span>l</span><span>e</span><span>a</span><span>u</span></span>
        <svg className="ml-auto mr-[8px] h-[18px] w-[240px]" viewBox="0 0 240 18" fill="none" stroke="#bcbcbc" strokeWidth="1.100">
          <path d="M14 9H2M7 4L2 9l5 5M39 9h12M46 4l5 5-5 5M79 5.500h-7q-4 0-4 3.500t4 3.500h8q4 0 4-3.500t-4-3.500M76.500 2.500l3 3-3 3" />
          <path d="M95 7h7l-3.500 5z" fill="#bcbcbc" stroke="none" />
          <path d="M116.500 3v12M131 9h-12M124 4l-5 5 5 5" />
          <g stroke="#666"><circle cx="155" cy="9" r="2.200" /><circle cx="162" cy="4.500" r="2.200" /><circle cx="162" cy="13.500" r="2.200" /><path d="M157 8l3-2.200M157 10l3 2.200M190.500 11H187V2.500h13V11H196.500M193.500 6v9M191 12.500l2.500 2.500 2.500-2.500" />
            <path d="M225.500 5.500h9v7h-9zM222.500 6V3h3.500M234 3h3.500v3M237.500 12v3H234M226 15h-3.500v-3" /></g>
        </svg>
      </div>
    </div>
  );
}

const slot = "flex h-10 w-[49px] items-center justify-center";

function Taskbar() {
  return (
    <footer className="flex h-10 bg-[linear-gradient(90deg,#3c1226_0,#381327_48px,#332b2e_390px,#252120_520px,#2b2825_700px,#352a25_1000px,#2b2426_1180px,#2a2425_1366px)] text-white">
      <div className="flex w-12 items-center justify-center"><FaWindows className="h-4 w-4" /></div>
      <div className="flex w-[344px] items-center border-t border-[#bdbdbd] bg-[#f0f0f0] pl-[9px] pr-[14px] text-[#222]">
        <svg className="h-[22px] w-[22px]" viewBox="0 0 22 22"><circle cx="11" cy="11" r="9" fill="none" stroke="#060606" strokeWidth="3" /></svg>
        <span className="ml-[9px] text-[14.5px] tracking-[-0.28px]">Type here to search</span>
        <svg className="ml-auto h-[18px] w-[12px]" viewBox="0 0 12 18" fill="none" stroke="#222" strokeWidth="1.100"><rect x="3.500" y="1" width="5" height="10" rx="1" /><path d="M1 8v3.500q0 2.500 2.500 2.500h5q2.500 0 2.500-2.500V8M6 14v3M3 17h6" /></svg>
      </div>
      <div className="flex pl-[3px]">
        <div className={slot}><svg className="h-[22px] w-[20px]" viewBox="0 0 20 22"><path d="M0 9.500C1 3 5 0 10.500 0 17 0 20 4.500 20 9v3.500H7C7.200 16 10 17.500 13 17.500c2 0 4-.5 5.500-1.500v4.200C16.500 21.500 14 22 11.500 22 6 22 2 19 2 13.500 2 10 4.500 7 7.500 5.500 7 6.500 6.800 7.500 6.800 8.500H13C13 6 11.500 4.300 9 4.300 5 4.300 1.800 6.500 0 9.500z" fill="#0078d7" /></svg></div>
        <div className={slot}><svg className="ml-[10px] h-[28px] w-[36px]" viewBox="0 0 36 28"><path d="M1 8l12-7 12 7v15H1z" fill="#0567b5" /><path d="M3 8h20v8H3z" fill="#eef3f7" /><path d="M1 8l12 8L25 8v15H1z" fill="#32b6f0" /><path d="M1 23L14 13l11 10z" fill="#159de3" /><circle cx="25.500" cy="18.500" r="9" fill="#30353a" stroke="#8b8f91" strokeWidth=".8" /><text x="25.500" y="22.500" textAnchor="middle" fontSize="11" fill="#fff" fontWeight="600" fontFamily="Open Sans, sans-serif">13</text></svg></div>
        <div className={`${slot} border-x-[4px] border-transparent shadow-[inset_0_-2px_0_#76b9ed]`}><svg className="h-[20px] w-[23px]" viewBox="0 0 23 20"><path d="M1 0h8l1.500 2H22v16H1z" fill="#e9c763" /><path d="M1 4h22v14H1z" fill="#fbe093" /><path d="M5 19v-8h13v8h-4v-4H9v4z" fill="#3ea8dc" /><path d="M2.500 1h5v1h-5z" fill="#fff" /></svg></div>
        <div className={`${slot} pr-[2px]`}><svg className="h-[24px] w-[23px]" viewBox="0 0 24 24"><path d="M6.500 8V1h11v7" fill="none" stroke="#dcdcdc" strokeWidth="1.800" /><path d="M0 6h24l-1 18H1z" fill="#eee" /><path d="M7.500 10.500h4v4h-4z" fill="#f25022" /><path d="M12.500 10.500h4v4h-4z" fill="#7fba00" /><path d="M7.500 15.500h4v4h-4z" fill="#00a4ef" /><path d="M12.500 15.500h4v4h-4z" fill="#ffb900" /></svg></div>
        <div className={slot}><svg className="h-[24px] w-[25px]" viewBox="0 0 25 24"><path d="M1 16C-1 9 5 4 13 4c7 0 11 4 9 9-1 4-4 7-8 8-3 1-2-3-5-3-4 1-7 1-8-2z" fill="#b9dcf2" stroke="#77a7c6" strokeWidth=".7" /><circle cx="5.500" cy="13" r="2" fill="#d74336" /><circle cx="8.500" cy="8.500" r="2" fill="#65b55c" /><circle cx="14" cy="7" r="2" fill="#f1b93b" /><circle cx="11" cy="14" r="1.800" fill="#fff" /><path d="M21 4L13 23l-1 1 1-5 6-15z" fill="#f29b31" /><path d="M18 4l3-4q3 0 3 2l-3 4z" fill="#bb895b" /></svg></div>
        <div className={`${slot} pr-[2px]`}><svg className="h-[23px] w-[20px]" viewBox="0 0 20 23"><path d="M2 17h16l2 5H0z" fill="#f58b1c" /><path d="M9 0h2l5.500 18q-6.500 3-13 0z" fill="#f0851a" /><path d="M7.500 5.500h5l1.200 4H6.300zM5.100 13.500h9.800l1.100 3.500H4z" fill="#e9e9e7" /></svg></div>
        <div className="flex h-10 w-12 items-center justify-center border-b-2 border-[#76b9ed] bg-[#5c5957]">
          <svg className="ml-[2px] mt-[2px] h-[26px] w-[26px]" viewBox="0 0 26 26"><circle cx="12" cy="12" r="12" fill="#30a552" /><path d="M1.600 6A12 12 0 0 1 22.400 6H12l-5 9z" fill="#e33b2e" /><path d="M22.400 6A12 12 0 0 1 12 24l5-9-5-9z" fill="#fcc934" /><circle cx="12" cy="12" r="5.800" fill="#fff" /><circle cx="12" cy="12" r="4.500" fill="#3b78e7" /><circle cx="18.500" cy="18.500" r="7.500" fill="#6b7030" /><path d="M11.500 16l4 1 1-3 3 2 4-2 2 1-4 4 1 5-6 1-2-4z" fill="#f3e41a" /><path d="M15 17l3 1M17 21h3M21 17l2-2M14 22l2 1" stroke="#433d0d" /></svg>
        </div>
        <div className="ml-[5px] flex h-10 w-10 items-center justify-center border-b-2 border-[#76b9ed]">
          <svg className="h-[20px] w-[20px]" viewBox="0 0 20 20"><circle cx="10" cy="10" r="5.500" fill="none" stroke="#fff" strokeWidth="2.600" /><path d="M10 1v3M10 16v3M1 10h3M16 10h3M3.600 3.600l2.200 2.200M14.200 14.200l2.200 2.200M3.600 16.400l2.200-2.200M14.200 5.800l2.200-2.200" stroke="#fff" strokeWidth="3" /></svg>
        </div>
      </div>
      <div className="ml-auto flex items-center">
        <svg className="mr-[9px] h-[7px] w-[13px]" viewBox="0 0 13 7"><path d="M.5 6.500l6-6 6 6" fill="none" stroke="#fff" strokeWidth="1.300" /></svg>
        <svg className="mr-[10px] h-[13px] w-[17px]" viewBox="0 0 17 13" fill="none" stroke="#fff" strokeWidth="1.100"><path d="M6 3.500h9v8H5V8M15 6h1.500v3H15M1 3.500h4V6L4 7.500H2L1 6zM2 1v2.500M4 1v2.500M3 8v2.500h4l2-4" /></svg>
        <svg className="mr-[7px] mt-[2px] h-[13px] w-[14px]" viewBox="0 0 14 13" fill="none" stroke="#ddd" strokeWidth="1.100"><path d="M1 12.500Q1 2 12 1M4 12.500Q4 5 12 4M7 12.500Q7 8 12 7" /><path d="M10 12.500q0-2 2.500-2v2z" fill="#fff" /></svg>
        <svg className="mr-[8px] h-[14px] w-[17px]" viewBox="0 0 17 14" fill="none" stroke="#fff" strokeWidth="1.100"><path d="M1 5h2.500L7 1.500v11L3.500 9H1zM9.500 5q1.500 2 0 4M11.700 3.500q2.800 3.500 0 7M14 2q4 5 0 10" /></svg>
        <svg className="mr-[11px] h-[14px] w-[23px]" viewBox="0 0 23 14" fill="none" stroke="#fff"><path d="M.5 1h22v12H.5z" /><path d="M3 4.500h17M3 7h17" strokeDasharray="1.500 1.500" /><path d="M3 10h2M7 10h9M18 10h2" /></svg>
        <span className="w-[35px] text-[12px] tracking-[-0.5px]">ENG</span>
        <div className="flex w-[58px] flex-col items-center whitespace-nowrap text-[12px] leading-[18px] tracking-[-0.6px]"><div>20:08</div><div>10-10-2023</div></div>
        <svg className="ml-[17px] mr-[12px] mt-[8px] h-[25px] w-[26px]" viewBox="0 0 26 25"><path d="M1 0h16v13H8l-3 4v-4H1z" fill="#fff" /><path d="M4 3.500h10M4 6.500h10M4 9.500h6" stroke="#292425" /><circle cx="16.500" cy="15.500" r="8" fill="#3a3536" stroke="#858182" /><text x="16.500" y="19.500" textAnchor="middle" fontSize="11" fontWeight="600" fill="#fff" fontFamily="Open Sans, sans-serif">5</text></svg>
        <div className="mr-[4px] h-10 w-px bg-[#6d6869]" />
      </div>
    </footer>
  );
}

export default function App() {
  return (
    <div className="flex h-[768px] w-[1366px] flex-col overflow-hidden bg-white font-['Open_Sans',sans-serif]">
      <Browser />
      <main className="flex h-[619px]">
        <Viz />
        <div className="flex w-[17px] flex-col items-center bg-[#f1f1f1]">
          <svg className="mt-[7px] h-[4px] w-[8px]" viewBox="0 0 8 4"><path d="M4 0l4 4H0z" fill="#505050" /></svg>
          <div className="mt-[129px] h-[298px] w-[13px] bg-[#c1c1c1]" />
          <svg className="mb-[7px] mt-auto h-[4px] w-[8px]" viewBox="0 0 8 4"><path d="M0 0h8L4 4z" fill="#505050" /></svg>
        </div>
      </main>
      <Taskbar />
    </div>
  );
}
